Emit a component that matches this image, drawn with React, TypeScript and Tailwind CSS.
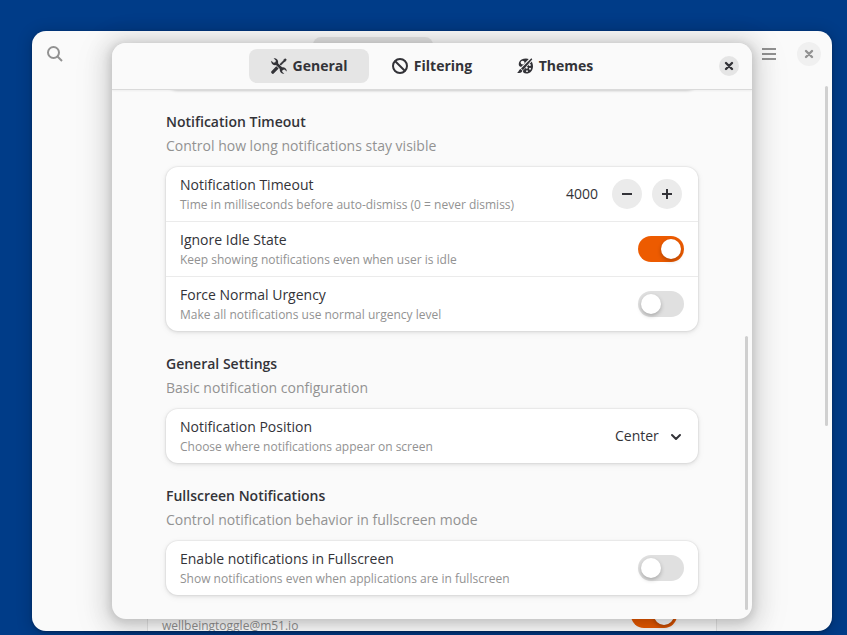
import { useState, type ReactNode } from 'react';

interface SwitchProps {
  label: string;
  checked: boolean;
  onChange?: (checked: boolean) => void;
}

function Switch({ label, checked, onChange }: SwitchProps) {
  return (
    <span className="relative flex h-[26px] w-[46px] shrink-0">
      <input
        type="checkbox"
        role="switch"
        aria-label={label}
        checked={checked}
        onChange={(e) => onChange?.(e.target.checked)}
        className="peer h-full w-full appearance-none rounded-full bg-[#e0e0e0] checked:bg-[#ed5b00]"
      />
      <span className="pointer-events-none absolute top-[3px] left-[3px] size-5 rounded-full bg-white shadow-[0_2px_4px_rgba(0,0,0,0.25)] peer-checked:left-[23px]" />
    </span>
  );
}

function CloseIcon() {
  return (
    <svg className="size-4" viewBox="0 0 16 16" fill="none" stroke="currentColor" strokeWidth={2.4} strokeLinecap="round">
      <path d="M5 5l6 6M11 5l-6 6" />
    </svg>
  );
}

function ToolsIcon() {
  return (
    <svg className="size-4" viewBox="0 0 16 16" fill="currentColor">
      {/* wrench */}
      <path d="M2.6.3A3.9 3.9 0 0 1 7 5.3l4 4a3.9 3.9 0 0 1 4.7 4.2L13.5 11.5l-1.9.5-.5 1.7 2.2 2.1A3.9 3.9 0 0 1 8.9 11L5 7.1A3.9 3.9 0 0 1 .3 2.7l2.2 2.1 1.9-.5.5-1.8z" />
      {/* screwdriver */}
      <path d="M14.4.2l1.4 1.4-1 1.9-1.200.5-3.800 3.800-1.500-1.500 3.800-3.800.5-1.200z" stroke="#e5e5e5" strokeWidth={0.4} />
      <path d="M5.3 8.3l2.300 2.300-4.600 4.700a1.600 1.600 0 0 1-2.300-2.300z" />
    </svg>
  );
}

function BlockIcon() {
  return (
    <svg className="size-4" viewBox="0 0 16 16" fill="none" stroke="currentColor" strokeWidth={2}>
      <circle cx="8" cy="8" r="7" />
      <path d="M3 3l10 10" />
    </svg>
  );
}

function PaletteIcon() {
  return (
    <svg className="size-4" viewBox="0 0 16 16" fill="currentColor">
      <mask id="palette-mask">
        <rect width="16" height="16" fill="white" />
        <path d="M16-.5L0 16" stroke="black" strokeWidth={4} />
        <circle cx="5.6" cy="4.6" r="1.9" fill="black" />
        <circle cx="12.800" cy="7" r="1.1" fill="black" />
        <circle cx="9.800" cy="9.800" r="1" fill="black" />
        <circle cx="13" cy="10.800" r="1" fill="black" />
        <circle cx="10" cy="13.200" r="0.900" fill="black" />
      </mask>
      <path mask="url(#palette-mask)" d="M9 .6c4.200 0 7 3.400 7 7.600s-2.800 7.400-6.600 7.400c-2.700 0-3.400-1.300-3.400-2.600 0-1.500-.6-3.600-2.400-4.200C1.800 8.200 1.400 6.400 2 4.500 2.800 2 5.800.6 9 .6z" />
      {/* brush */}
      <path d="M14.300.3l1 .9L6 12.200 4 10.500z" />
      <path d="M3.500 11l2 1.700c-.9 2.100-3 2.500-5.400 2.400 1.600-1 1.600-3.500 3.400-4.100z" />
    </svg>
  );
}

interface RowProps {
  title: string;
  subtitle: string;
  children: ReactNode;
}

function Row({ title, subtitle, children }: RowProps) {
  return (
    <div className="box-content flex h-[54px] items-center justify-between px-3.5">
      <div className="pt-0.5">
        <p className="text-sm leading-5">{title}</p>
        <p className="text-xs leading-5 text-[#929292]">{subtitle}</p>
      </div>
      {children}
    </div>
  );
}

interface GroupProps {
  title: string;
  description: string;
  children: ReactNode;
}

function Group({ title, description, children }: GroupProps) {
  return (
    <section>
      <h2 className="text-sm leading-[18px] font-semibold">{title}</h2>
      <p className="mt-1.5 mb-3 text-sm leading-[18px] text-[#929292]">{description}</p>
      <div className="divide-y divide-[#ebebeb] rounded-xl bg-white shadow-[0_0_0_1px_rgba(0,0,0,0.03),0_1px_3px_1px_rgba(0,0,0,0.07),0_2px_6px_2px_rgba(0,0,0,0.03)]">
        {children}
      </div>
    </section>
  );
}

const tabs = [
  { name: 'General', icon: <ToolsIcon /> },
  { name: 'Filtering', icon: <BlockIcon /> },
  { name: 'Themes', icon: <PaletteIcon /> },
];

const roundButton = 'flex size-[30px] items-center justify-center rounded-full bg-[#ebebeb]';

// The extensions window that sits behind the preferences dialog
function WindowBackdrop() {
  return (
    <div className="absolute inset-0 flex flex-col justify-between overflow-hidden rounded-[14px] bg-[#fafafa] text-[#929292]">
      <header className="grid h-[46px] grid-cols-[1fr_auto_1fr] items-center pr-[11px] pl-[15px]">
        <button aria-label="Search" className="justify-self-start">
          <svg className="size-4" viewBox="0 0 16 16" fill="none" stroke="currentColor" strokeWidth={2}>
            <circle cx="6.500" cy="6.500" r="5.500" />
            <path d="M10.500 10.500l4.500 4.500" />
          </svg>
        </button>
        <div className="flex gap-[3px]">
          <div className="h-[34px] w-[120px] rounded-lg bg-[#e5e5e5]" />
          <div className="h-[34px] w-[120px]" />
        </div>
        <div className="flex items-center gap-5 justify-self-end">
          <button aria-label="Menu">
            <svg className="size-4" viewBox="0 0 16 16" fill="none" stroke="currentColor" strokeWidth={2}>
              <path d="M1 3h14M1 8h14M1 13h14" />
            </svg>
          </button>
          <button aria-label="Close window" className="flex size-6 items-center justify-center rounded-full bg-[#f0f0f0]">
            <CloseIcon />
          </button>
        </div>
      </header>
      <div className="absolute top-[55px] right-1 h-[340px] w-[3px] rounded-full bg-[#d0d0d0]" />
      <div className="mx-[115px] flex h-12 items-end justify-between border-x border-[#e6e6e6] bg-white pr-[39px] pl-3.5">
        <p className="text-xs leading-[10px]">wellbeingtoggle@m51.io</p>
        <div className="mb-[3px]">
          <Switch label="Wellbeing toggle" checked />
        </div>
      </div>
    </div>
  );
}

export default function App() {
  const [timeout, setTimeoutMs] = useState(4000);
  const [ignoreIdle, setIgnoreIdle] = useState(true);
  const [forceNormal, setForceNormal] = useState(false);
  const [fullscreen, setFullscreen] = useState(false);
  const [activeTab, setActiveTab] = useState('General');

  return (
    <main className="min-h-screen bg-[#003c88] pt-[31px] pr-[15px] pb-1 pl-8 font-['Open_Sans','Noto_Sans',sans-serif] text-[#333338]">
      <div className="relative rounded-[14px] px-20 py-3 shadow-[0_1px_3px_rgba(0,0,0,0.3),0_2px_14px_3px_rgba(0,0,0,0.15)]">
        <WindowBackdrop />
        <div
          role="dialog"
          aria-label="Preferences"
          className="relative overflow-hidden rounded-[14px] bg-[#fafafa] shadow-[0_2px_8px_2px_rgba(0,0,0,0.13),0_3px_20px_10px_rgba(0,0,0,0.09),0_6px_32px_16px_rgba(0,0,0,0.04)]"
        >
          <header className="relative z-10 flex h-[47px] items-center justify-center border-b border-[#dadada] bg-[#fafafa] shadow-[0_1px_2px_rgba(0,0,0,0.05)]">
            <nav className="flex gap-[3px]">
              {tabs.map((tab) => (
                <button
                  key={tab.name}
                  onClick={() => setActiveTab(tab.name)}
                  className={`flex h-[34px] w-[120px] items-center justify-center gap-1.5 rounded-lg text-sm font-bold ${activeTab === tab.name ? 'bg-[#e5e5e5]' : ''}`}
                >
                  {tab.icon}
                  {tab.name}
                </button>
              ))}
            </nav>
            <button aria-label="Close" className="absolute right-[13px] flex size-5 items-center justify-center rounded-full bg-[#e5e5e5]">
              <CloseIcon />
            </button>
          </header>

          <div className="flex flex-col gap-6 px-[54px] pb-6">
            {/* tail of the group scrolled under the header */}
            <div className="-mt-[25px] h-6 rounded-xl bg-white shadow-[0_1px_3px_1px_rgba(0,0,0,0.15)]" />

            <Group title="Notification Timeout" description="Control how long notifications stay visible">
              <Row title="Notification Timeout" subtitle="Time in milliseconds before auto-dismiss (0 = never dismiss)">
                <div className="mr-0.5 flex items-center gap-2.5">
                  <input
                    aria-label="Notification Timeout"
                    value={timeout}
                    onChange={(e) => setTimeoutMs(Number(e.target.value) || 0)}
                    className="mr-1 w-12 bg-transparent text-right text-sm outline-none"
                  />
                  <button aria-label="Decrease" className={roundButton} onClick={() => setTimeoutMs(timeout - 100)}>
                    <span className="h-0.5 w-2.5 bg-current" />
                  </button>
                  <button aria-label="Increase" className={roundButton} onClick={() => setTimeoutMs(timeout + 100)}>
                    <svg className="size-2.5" viewBox="0 0 10 10" stroke="currentColor" strokeWidth={2}>
                      <path d="M5 0v10M0 5h10" />
                    </svg>
                  </button>
                </div>
              </Row>
              <Row title="Ignore Idle State" subtitle="Keep showing notifications even when user is idle">
                <Switch label="Ignore Idle State" checked={ignoreIdle} onChange={setIgnoreIdle} />
              </Row>
              <Row title="Force Normal Urgency" subtitle="Make all notifications use normal urgency level">
                <Switch label="Force Normal Urgency" checked={forceNormal} onChange={setForceNormal} />
              </Row>
            </Group>

            <Group title="General Settings" description="Basic notification configuration">
              <Row title="Notification Position" subtitle="Choose where notifications appear on screen">
                <div className="relative flex items-center">
                  <select aria-label="Notification Position" defaultValue="Center" className="appearance-none bg-transparent pr-[25px] text-sm outline-none">
                    <option>Center</option>
                  </select>
                  <svg className="pointer-events-none absolute right-0 size-4" viewBox="0 0 16 16" fill="none" stroke="currentColor" strokeWidth={2} strokeLinecap="round" strokeLinejoin="round">
                    <path d="M4 7l4 4 4-4" />
                  </svg>
                </div>
              </Row>
            </Group>

            <Group title="Fullscreen Notifications" description="Control notification behavior in fullscreen mode">
              <Row title="Enable notifications in Fullscreen" subtitle="Show notifications even when applications are in fullscreen">
                <Switch label="Enable notifications in Fullscreen" checked={fullscreen} onChange={setFullscreen} />
              </Row>
            </Group>
          </div>

          <div className="absolute right-1 bottom-[9px] h-[274px] w-[3px] rounded-full bg-[#cfcfcf]" />
        </div>
      </div>
    </main>
  );
}
